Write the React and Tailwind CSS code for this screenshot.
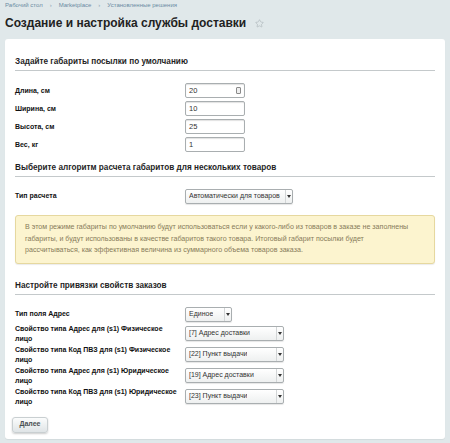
import { Star } from "lucide-react";

const font = { fontFamily: '"Liberation Sans", Arial, sans-serif' };

function Heading({ children, className = "" }) {
  return (
    <div className={`border-b border-[#c4c9cb] pb-[3px] text-[8.2px] font-bold leading-[11px] text-[#1f1f1f] ${className}`}>
      {children}
    </div>
  );
}

function TextInput({ value, icon }) {
  return (
    <div className="relative flex h-[15px] w-[60px] items-center rounded-[2px] border border-[#a9aeb0] bg-white pl-[3px] text-[7.5px] text-[#333] shadow-[inset_0_1px_1px_rgba(0,0,0,0.12)]">
      {value}
      {icon && (
        <span className="absolute right-[3px] top-[3px] h-[7px] w-[5px] rounded-[1px] border border-[#8a8a8a] bg-[#eee]" />
      )}
    </div>
  );
}

function Select({ value, w }) {
  return (
    <div className={`relative flex h-[15px] ${w} items-center rounded-[2px] border border-[#a9aeb0] bg-gradient-to-b from-white to-[#eef0f0] pl-[3px] pr-[10px] text-[7px] text-[#333] shadow-[0_1px_1px_rgba(0,0,0,0.1)]`}>
      <span className="truncate">{value}</span>
      <span className="absolute right-0 top-0 flex h-full w-[7px] items-center justify-center border-l border-[#d2d5d6]">
        <svg width="4" height="3" viewBox="0 0 4 3">
          <path d="M0 0h4L2 3z" fill="#333" />
        </svg>
      </span>
    </div>
  );
}

function Row({ label, children }) {
  return (
    <div className="flex items-center">
      <div className="w-[170px] pr-[4px] text-[7px] font-bold leading-[10px] text-[#111]">{label}</div>
      {children}
    </div>
  );
}

export default function App() {
  const props = [
    ["Свойство типа Адрес для (s1) Физическое лицо", "[7] Адрес доставки"],
    ["Свойство типа Код ПВЗ для (s1) Физическое лицо", "[22] Пункт выдачи"],
    ["Свойство типа Адрес для (s1) Юридическое лицо", "[19] Адрес доставки"],
    ["Свойство типа Код ПВЗ для (s1) Юридическое лицо", "[23] Пункт выдачи"],
  ];

  return (
    <div style={font} className="min-h-[443px] w-[450px] bg-[#e0e8ea] pb-[6px]">
      {/* breadcrumbs */}
      <div className="flex items-center gap-[7px] px-[5px] pt-[2px] text-[6px] leading-[7px] text-[#6b8ba3]">
        <span>Рабочий стол</span>
        <span className="text-[#8aa0ae]">›</span>
        <span>Marketplace</span>
        <span className="text-[#8aa0ae]">›</span>
        <span>Установленные решения</span>
      </div>

      {/* title */}
      <div className="mt-[6px] flex items-center gap-[9px] px-[5px]">
        <h1 className="text-[12px] font-bold leading-[16px] text-[#222]">Создание и настройка службы доставки</h1>
        <Star size={9} strokeWidth={1.5} className="text-[#a7b0b4]" />
      </div>

      {/* card */}
      <div className="mx-[5px] mt-[8px] w-[440px] rounded-[3px] bg-white px-[10px] pb-[6px] pt-[17px] shadow-[0_1px_1px_rgba(0,0,0,0.06)]">
        <Heading>Задайте габариты посылки по умолчанию</Heading>
        <div className="mt-[12px] flex flex-col gap-[3px]">
          <Row label="Длина, см"><TextInput value="20" icon /></Row>
          <Row label="Ширина, см"><TextInput value="10" /></Row>
          <Row label="Высота, см"><TextInput value="25" /></Row>
          <Row label="Вес, кг"><TextInput value="1" /></Row>
        </div>

        <Heading className="mt-[10px]">Выберите алгоритм расчета габаритов для нескольких товаров</Heading>
        <div className="mt-[12px] flex items-start">
          <div className="w-[170px] pt-[2px] text-[7px] font-bold leading-[10px] text-[#111]">Тип расчета</div>
          <Select value="Автоматически для товаров" w="w-[108px]" />
        </div>

        <div className="mt-[11px] whitespace-nowrap rounded-[3px] border border-[#e6d89f] bg-[#fcf4cf] px-[9px] py-[6px] text-[7.1px] leading-[11.5px] text-[#877b5a] shadow-[0_1px_1px_rgba(0,0,0,0.08)]">
          <div>В этом режиме габариты по умолчанию будут использоваться если у какого-либо из товаров в заказе не заполнены</div>
          <div>габариты, и будут использованы в качестве габаритов такого товара. Итоговый габарит посылки будет</div>
          <div>рассчитываться, как эффективная величина из суммарного объема товаров заказа.</div>
        </div>

        <Heading className="mt-[16px]">Настройте привязки свойств заказов</Heading>
        <div className="mt-[12px] flex flex-col gap-[1px]">
          <div className="mb-[1px]">
            <Row label="Тип поля Адрес"><Select value="Единое" w="w-[47px]" /></Row>
          </div>
          {props.map(([l, v]) => (
            <Row key={l} label={l}><Select value={v} w="w-[99px]" /></Row>
          ))}
        </div>

        <button className="-ml-[3px] mt-[10px] h-[16px] w-[36px] rounded-[3px] border border-[#c9cfd1] bg-gradient-to-b from-[#fbfcfc] to-[#dfe4e6] text-[7px] font-bold text-[#4a4f52] shadow-[0_1px_2px_rgba(0,0,0,0.2)]">
          Далее
        </button>
      </div>
    </div>
  );
}
